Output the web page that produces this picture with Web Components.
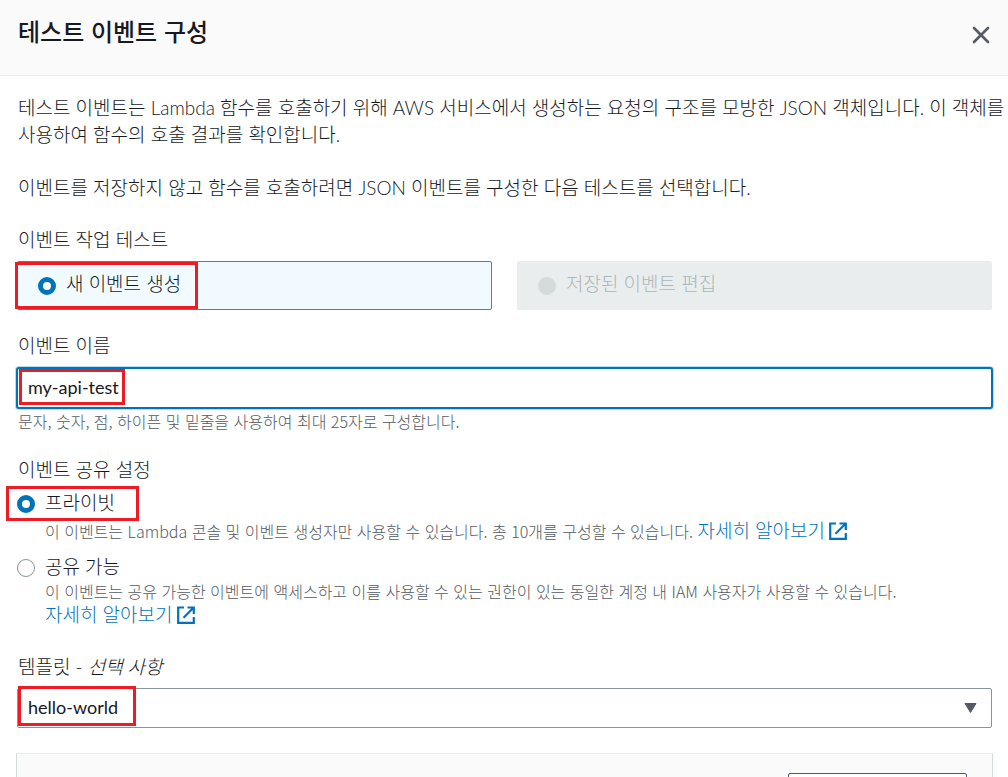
<!DOCTYPE html>
<html lang="ko">
<head>
<meta charset="utf-8">
<meta name="viewport" content="width=device-width, initial-scale=1">
<title>테스트 이벤트 구성</title>
<style>
   body {
      margin: 0;
      height: 100vh;
      overflow: hidden;
      background: #fff;
      color: #16191f;
      font: 300 19px/24px Lato, "Noto Sans CJK KR", sans-serif;
   }
   p { margin: 0 -14px 26px 0; line-height: 27px; }
</style>
</head>
<body>
<event-modal heading="테스트 이벤트 구성">
   <p>테스트 이벤트는 Lambda 함수를 호출하기 위해 AWS 서비스에서 생성하는 요청의 구조를 모방한 JSON 객체입니다. 이 객체를 사용하여 함수의 호출 결과를 확인합니다.</p>
   <p>이벤트를 저장하지 않고 함수를 호출하려면 JSON 이벤트를 구성한 다음 테스트를 선택합니다.</p>
   <event-tiles label="이벤트 작업 테스트"></event-tiles>
   <text-field label="이벤트 이름" value="my-api-test" hint="문자, 숫자, 점, 하이픈 및 밑줄을 사용하여 최대 25자로 구성합니다."></text-field>
   <sharing-settings label="이벤트 공유 설정"></sharing-settings>
   <template-select></template-select>
   <code-panel></code-panel>
</event-modal>

<script>
const base = `
   * { box-sizing: border-box; }
   :host { display: block; }
   fieldset { border: 0; margin: 0; padding: 0; min-width: 0; }
   legend, .label { display: block; padding: 1px 0 0; height: 34px; }
   input, select, button { font: inherit; color: inherit; margin: 0; }
   input[type=text], select { font: 400 18px/24px Lato, "Noto Sans CJK KR", sans-serif; }
   input[type=radio] {
      appearance: none;
      flex: none;
      width: 18px;
      height: 18px;
      border: 1px solid #879596;
      border-radius: 50%;
      background: #fff;
   }
   input[type=radio]:checked { border: 5px solid #0073bb; }
   input[type=radio]:disabled { border-color: #d5dbdb; background: #d5dbdb; }
`;

class RedMark extends HTMLElement {
   connectedCallback() {
      this.attachShadow({ mode: 'open' }).innerHTML = `
         <style>
            :host {
               position: absolute;
               box-sizing: border-box;
               border: 3px solid #ed1c24;
               pointer-events: none;
            }
         </style>
      `;
   }
}

class EventModal extends HTMLElement {
   connectedCallback() {
      this.attachShadow({ mode: 'open' }).innerHTML = `
         <style>
            ${base}
            header {
               display: flex;
               justify-content: space-between;
               align-items: flex-start;
               height: 76px;
               padding: 16px 18px;
               background: #fafafa;
               border-bottom: 1px solid #eaeded;
            }
            h2 { margin: 0; font: 500 24px/30px "Noto Sans CJK KR", sans-serif; }
            button { display: flex; padding: 10px 0; border: 0; background: none; }
            main { padding: 18px 16px 0 18px; }
         </style>
         <header>
            <h2>${this.getAttribute('heading')}</h2>
            <button type="button" aria-label="닫기">
               <svg width="18" height="18" viewBox="0 0 18 18" fill="none" stroke="#545b64" stroke-width="2.6" stroke-linecap="round">
                  <path d="M2 2l14 14M16 2L2 16"/>
               </svg>
            </button>
         </header>
         <main><slot></slot></main>
      `;
   }
}

class EventTiles extends HTMLElement {
   connectedCallback() {
      this.attachShadow({ mode: 'open' }).innerHTML = `
         <style>
            ${base}
            :host { margin-bottom: 23px; }
            .tiles { display: grid; grid-template-columns: 1fr 1fr; gap: 25px; margin-left: -1px; }
            .tile {
               position: relative;
               display: flex;
               align-items: center;
               gap: 10px;
               height: 49px;
               padding: 0 20px 4px;
               border: 1px solid #00a1c9;
               border-radius: 2px;
               background: #f1faff;
            }
            .tile input { margin-top: 4px; }
            .tile.off { border-color: #eaeded; background: #eaeded; color: #aab7b8; }
            red-mark { left: -3px; top: 0; width: 183px; height: 47px; }
         </style>
         <fieldset>
            <legend>${this.getAttribute('label')}</legend>
            <div class="tiles">
               <label class="tile"><input type="radio" name="action" checked>새 이벤트 생성<red-mark></red-mark></label>
               <label class="tile off"><input type="radio" name="action" disabled>저장된 이벤트 편집</label>
            </div>
         </fieldset>
      `;
   }
}

class TextField extends HTMLElement {
   connectedCallback() {
      this.attachShadow({ mode: 'open' }).innerHTML = `
         <style>
            ${base}
            :host { margin-bottom: 26px; }
            .box { position: relative; margin: 0 -1px 0 -2px; }
            input {
               display: block;
               width: 100%;
               height: 42px;
               padding: 0 10px 2px;
               border: 2px solid #0073bb;
               border-radius: 3px;
               box-shadow: 0 0 0 1px #b8dcf0;
               background: #fff;
               outline: 0;
            }
            .hint {
               padding-top: 2px;
               font: 300 16px/20px "Noto Sans CJK KR", sans-serif;
               color: #545b64;
            }
            red-mark { left: 3px; top: 2px; width: 106px; height: 36px; }
         </style>
         <label class="label" for="name">${this.getAttribute('label')}</label>
         <div class="box">
            <input id="name" type="text" value="${this.getAttribute('value')}">
            <red-mark></red-mark>
         </div>
         <div class="hint">${this.getAttribute('hint')}</div>
      `;
   }
}

class LearnMore extends HTMLElement {
   connectedCallback() {
      this.attachShadow({ mode: 'open' }).innerHTML = `
         <style>
            :host { display: inline-block; font: 300 19px/24px Lato, "Noto Sans CJK KR", sans-serif; }
            a { display: flex; align-items: center; gap: 4px; color: #0073bb; text-decoration: none; }
         </style>
         <a href="#">자세히 알아보기
            <svg width="18" height="18" viewBox="0 0 18 18" fill="none" stroke="#0073bb" stroke-width="2.2">
               <path d="M7 1.5H1.2v15.3h15.6V11M10.5 1.5h6.3V8M16.5 1.8L6.5 11.8"/>
            </svg>
         </a>
      `;
   }
}

class SharingSettings extends HTMLElement {
   connectedCallback() {
      this.attachShadow({ mode: 'open' }).innerHTML = `
         <style>
            ${base}
            :host { margin-bottom: 27px; }
            .option {
               position: relative;
               display: grid;
               grid-template-columns: 18px 1fr;
               column-gap: 10px;
               margin-left: -1px;
            }
            .option + .option { margin-top: 12px; }
            .option input { margin-top: 4px; }
            .desc {
               grid-column: 2;
               padding-top: 4px;
               font: 300 16px/24px "Noto Sans CJK KR", sans-serif;
               color: #545b64;
            }
            .option + .option .desc { padding-top: 0; }
            red-mark { left: -11px; top: -5px; width: 133px; height: 35px; }
         </style>
         <fieldset>
            <legend>${this.getAttribute('label')}</legend>
            <div class="option">
               <input id="private" type="radio" name="share" checked>
               <label for="private">프라이빗</label>
               <div class="desc">이 이벤트는 Lambda 콘솔 및 이벤트 생성자만 사용할 수 있습니다. 총 10개를 구성할 수 있습니다. <learn-more></learn-more></div>
               <red-mark></red-mark>
            </div>
            <div class="option">
               <input id="shared" type="radio" name="share">
               <label for="shared">공유 가능</label>
               <div class="desc">이 이벤트는 공유 가능한 이벤트에 액세스하고 이를 사용할 수 있는 권한이 있는 동일한 계정 내 IAM 사용자가 사용할 수 있습니다. <learn-more></learn-more></div>
            </div>
         </fieldset>
      `;
   }
}

class TemplateSelect extends HTMLElement {
   connectedCallback() {
      this.attachShadow({ mode: 'open' }).innerHTML = `
         <style>
            ${base}
            :host { margin-bottom: 25px; }
            .box { position: relative; margin-left: -1px; }
            select {
               display: block;
               appearance: none;
               width: 100%;
               height: 40px;
               padding: 0 40px 2px 10px;
               border: 1px solid #879596;
               border-radius: 2px;
               background: #fff;
            }
            svg { position: absolute; right: 15px; top: 15px; pointer-events: none; }
            red-mark { left: 1px; top: -2px; width: 118px; height: 40px; }
         </style>
         <label class="label" for="template">템플릿 - <i>선택 사항</i></label>
         <div class="box">
            <select id="template"><option>hello-world</option></select>
            <svg width="13" height="10" viewBox="0 0 13 10"><path d="M1 .5h11L6.5 9.5z" fill="#545b64" stroke="#545b64" stroke-linejoin="round"/></svg>
            <red-mark></red-mark>
         </div>
      `;
   }
}

class CodePanel extends HTMLElement {
   connectedCallback() {
      this.attachShadow({ mode: 'open' }).innerHTML = `
         <style>
            ${base}
            .panel {
               display: flex;
               justify-content: flex-end;
               height: 80px;
               margin: 0 -1px 0 -2px;
               padding: 19px 25px;
               background: #fafafa;
               border: 1px solid #d5dbdb;
               border-top-color: #eaeded;
            }
            button { width: 179px; height: 40px; border: 1px solid #545b64; border-radius: 2px; background: #fff; }
         </style>
         <div class="panel"><button type="button" aria-label="JSON 형식 지정"></button></div>
      `;
   }
}

customElements.define('red-mark', RedMark);
customElements.define('event-modal', EventModal);
customElements.define('event-tiles', EventTiles);
customElements.define('text-field', TextField);
customElements.define('learn-more', LearnMore);
customElements.define('sharing-settings', SharingSettings);
customElements.define('template-select', TemplateSelect);
customElements.define('code-panel', CodePanel);
</script>
</body>
</html>
